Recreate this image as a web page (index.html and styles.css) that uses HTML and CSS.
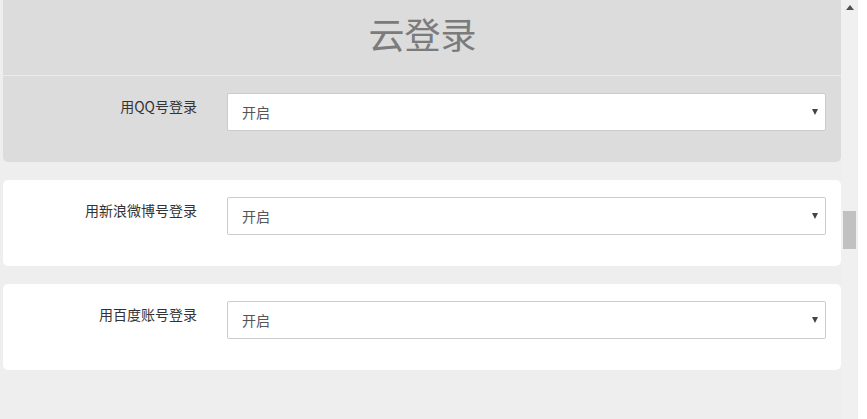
FILE: index.html
```html
<!DOCTYPE html>
<html lang="zh-CN">
<head>
<meta charset="utf-8">
<title>云登录</title>
<link rel="stylesheet" href="styles.css">
</head>
<body>
<div class="frame">
  <div class="viewport">
    <section class="panel panel-head">
      <header class="panel-title">云登录</header>
      <div class="row">
        <label class="row-label">用QQ号登录</label>
        <div class="select">
          <span class="select-value">开启</span>
          <span class="select-arrow"></span>
        </div>
      </div>
    </section>
    <section class="panel">
      <div class="row">
        <label class="row-label">用新浪微博号登录</label>
        <div class="select">
          <span class="select-value">开启</span>
          <span class="select-arrow"></span>
        </div>
      </div>
    </section>
    <section class="panel">
      <div class="row">
        <label class="row-label">用百度账号登录</label>
        <div class="select">
          <span class="select-value">开启</span>
          <span class="select-arrow"></span>
        </div>
      </div>
    </section>
  </div>
  <div class="scrollbar">
    <div class="scroll-up"></div>
    <div class="scroll-thumb"></div>
  </div>
</div>
</body>
</html>
```

FILE: styles.css
```css
* { box-sizing: border-box; }
html, body {
  margin: 0;
  padding: 0;
  background: #ffffff;
  font-family: "Noto Sans CJK SC", "Noto Sans", sans-serif;
}
.frame {
  display: flex;
  width: 867px;
  height: 419px;
  overflow: hidden;
}
.viewport {
  width: 841px;
  height: 419px;
  background: #eeeeee;
  padding-left: 3px;
  display: flex;
  flex-direction: column;
  gap: 18px;
}
.panel {
  background: #ffffff;
  border-radius: 5px;
  width: 838px;
}
.panel-head {
  background: #dcdcdc;
  border-radius: 0 0 5px 5px;
}
.panel-title {
  height: 76px;
  border-bottom: 1px solid #ebebeb;
  display: flex;
  align-items: center;
  justify-content: center;
  font-size: 36px;
  color: #7b7b7b;
  padding-left: 1px;
  padding-bottom: 10px;
}
.row {
  display: grid;
  grid-template-columns: 194px 599px;
  column-gap: 30px;
  padding: 17px 0 31px;
}
.row-label {
  text-align: right;
  font-size: 14px;
  line-height: 20px;
  color: #333333;
  padding-top: 3px;
}
.select {
  position: relative;
  height: 38px;
  background: #ffffff;
  border: 1px solid #cccccc;
  border-radius: 2px;
  display: flex;
  align-items: center;
  padding-left: 14px;
}
.select-value {
  font-size: 14px;
  color: #555555;
  line-height: 20px;
}
.select-arrow {
  position: absolute;
  right: 7px;
  top: 15px;
  width: 0;
  height: 0;
  border-left: 3.5px solid transparent;
  border-right: 3.5px solid transparent;
  border-top: 6px solid #444444;
}
.scrollbar {
  width: 17px;
  height: 419px;
  background: #f0f0f0;
  display: flex;
  flex-direction: column;
  align-items: center;
}
.scroll-up {
  margin-top: 5px;
  width: 0;
  height: 0;
  border-left: 4px solid transparent;
  border-right: 4px solid transparent;
  border-bottom: 5px solid #505050;
}
.scroll-thumb {
  margin-top: 201px;
  width: 13px;
  height: 38px;
  background: #c1c1c1;
}
```
